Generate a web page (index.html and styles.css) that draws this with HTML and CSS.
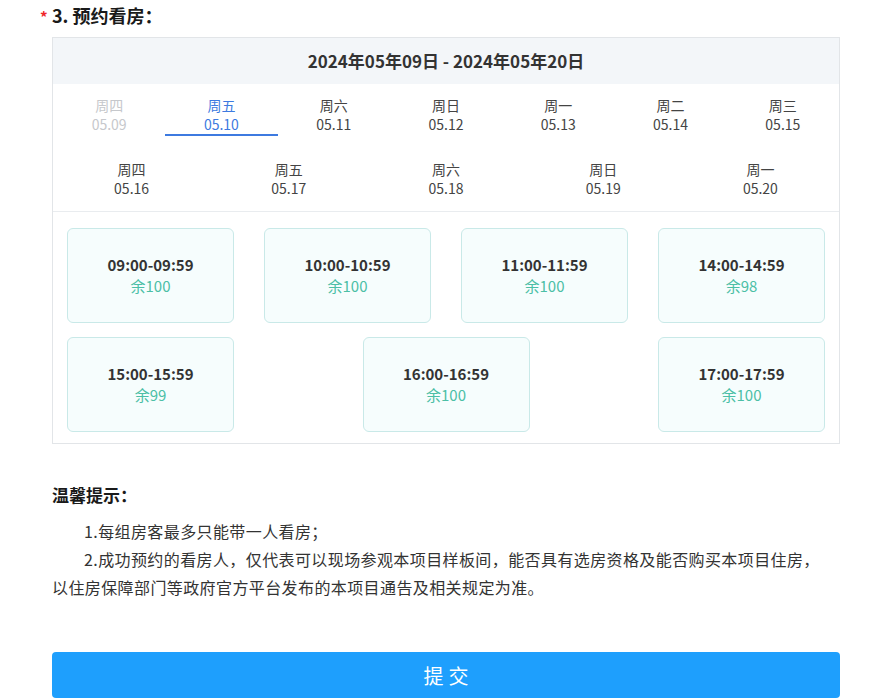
FILE: index.html
```html
<!DOCTYPE html>
<html lang="zh-CN">
<head>
<meta charset="utf-8">
<title>预约看房</title>
<link rel="stylesheet" href="styles.css">
</head>
<body>
<div class="page">
  <h2 class="q-title"><span class="req">*</span>3. 预约看房：</h2>
  <div class="panel">
    <div class="panel-head">2024年05年09日 - 2024年05年20日</div>
    <div class="dates">
      <div class="date-row row7">
        <div class="day is-disabled"><span class="wk">周四</span><span class="dt">05.09</span></div>
        <div class="day is-active"><span class="wk">周五</span><span class="dt">05.10</span></div>
        <div class="day"><span class="wk">周六</span><span class="dt">05.11</span></div>
        <div class="day"><span class="wk">周日</span><span class="dt">05.12</span></div>
        <div class="day"><span class="wk">周一</span><span class="dt">05.13</span></div>
        <div class="day"><span class="wk">周二</span><span class="dt">05.14</span></div>
        <div class="day"><span class="wk">周三</span><span class="dt">05.15</span></div>
      </div>
      <div class="date-row row5">
        <div class="day"><span class="wk">周四</span><span class="dt">05.16</span></div>
        <div class="day"><span class="wk">周五</span><span class="dt">05.17</span></div>
        <div class="day"><span class="wk">周六</span><span class="dt">05.18</span></div>
        <div class="day"><span class="wk">周日</span><span class="dt">05.19</span></div>
        <div class="day"><span class="wk">周一</span><span class="dt">05.20</span></div>
      </div>
    </div>
    <div class="slots">
      <div class="slot"><div class="time">09:00-09:59</div><div class="left">余100</div></div>
      <div class="slot"><div class="time">10:00-10:59</div><div class="left">余100</div></div>
      <div class="slot"><div class="time">11:00-11:59</div><div class="left">余100</div></div>
      <div class="slot"><div class="time">14:00-14:59</div><div class="left">余98</div></div>
      <div class="slot"><div class="time">15:00-15:59</div><div class="left">余99</div></div>
      <div class="slot"><div class="time">16:00-16:59</div><div class="left">余100</div></div>
      <div class="slot"><div class="time">17:00-17:59</div><div class="left">余100</div></div>
    </div>
  </div>
  <div class="tips">
    <h3 class="tips-title">温馨提示：</h3>
    <p class="tip">1.每组房客最多只能带一人看房；</p>
    <p class="tip">2.成功预约的看房人，仅代表可以现场参观本项目样板间，能否具有选房资格及能否购买本项目住房，以住房保障部门等政府官方平台发布的本项目通告及相关规定为准。</p>
  </div>
  <button class="submit" type="button">提交</button>
</div>
</body>
</html>
```

FILE: styles.css
```css
* { box-sizing: border-box; }
html, body { margin: 0; padding: 0; background: #fff; }
body {
  font-family: "Noto Sans CJK SC", "Noto Sans", sans-serif;
  color: #333;
}
.page {
  width: 788px;
  margin-left: 52px;
}
.q-title {
  margin: 0;
  font-size: 18px;
  line-height: 30px;
  font-weight: 700;
  color: #1a1a1a;
  display: flex;
  align-items: center;
}
.req {
  color: #f0262a;
  font-size: 15px;
  width: 12px;
  margin-left: -12px;
  line-height: 1;
  padding-top: 2px;
}
.panel {
  margin-top: 7px;
  border: 1px solid #e2e5e8;
}
.panel-head {
  height: 46px;
  line-height: 46px;
  background: #f3f6f9;
  text-align: center;
  font-size: 17px;
  font-weight: 700;
  color: #333;
}
.dates {
  padding-bottom: 11px;
  border-bottom: 1px solid #e9ecef;
  display: flex;
  flex-direction: column;
  gap: 12px;
}
.date-row { display: grid; }
.row7 { grid-template-columns: repeat(7, 1fr); }
.row5 { grid-template-columns: repeat(5, 1fr); }
.day {
  padding-top: 12px;
  display: flex;
  flex-direction: column;
  align-items: center;
  font-size: 14px;
  line-height: 19px;
  color: #444;
  border-bottom: 2px solid transparent;
}
.day.is-disabled { color: #c6c8cc; }
.day.is-active { color: #3d7ae0; border-bottom-color: #3d7ae0; }
.slots {
  padding: 16px 14px 11px;
  display: flex;
  flex-wrap: wrap;
  justify-content: space-between;
  row-gap: 14px;
}
.slot {
  width: 167px;
  height: 95px;
  padding-bottom: 2px;
  border: 1px solid #c9e9e8;
  border-radius: 6px;
  background: #f6fdfd;
  display: flex;
  flex-direction: column;
  align-items: center;
  justify-content: center;
  font-size: 15px;
  line-height: 21px;
}
.slot .time { font-weight: 700; color: #333; }
.slot .left { color: #4cbfa6; }
.tips { margin-top: 37px; }
.tips-title {
  margin: 0 0 8px;
  font-size: 17px;
  line-height: 28px;
  font-weight: 700;
  color: #1a1a1a;
}
.tip {
  margin: 0;
  padding-right: 10px;
  font-size: 16px;
  line-height: 28px;
  letter-spacing: 0.4px;
  text-indent: 2em;
  color: #333;
}
.submit {
  display: block;
  width: 100%;
  height: 46px;
  margin-top: 51px;
  border: 0;
  border-radius: 4px;
  background: #1e9ffd;
  color: #fff;
  font-family: inherit;
  font-size: 20px;
  letter-spacing: 5px;
  text-indent: 5px;
  cursor: pointer;
}
```
